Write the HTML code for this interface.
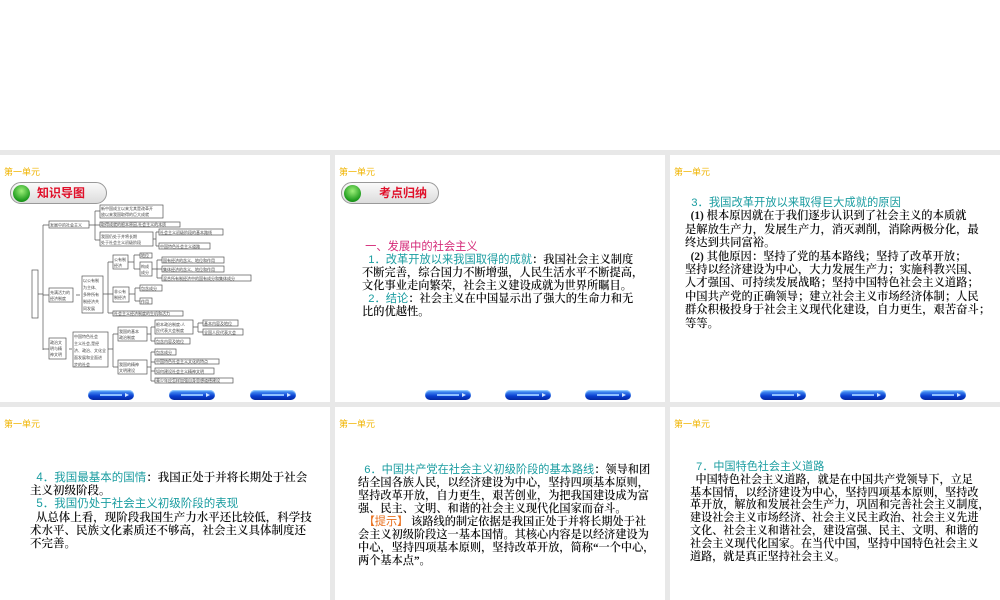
<!DOCTYPE html>
<html><head><meta charset="utf-8"><style>
*{margin:0;padding:0;box-sizing:border-box}
body{width:1000px;height:600px;overflow:hidden;background:#fff;position:relative;font-family:"Liberation Serif","Noto Serif CJK SC",serif}
.bg{position:absolute;left:0;top:150px;width:1000px;height:450px;background:#e8e8e8}
.s{position:absolute;background:#fff;width:330px;overflow:hidden}
.u{position:absolute;left:4px;top:12px;font-size:9px;color:#f0b400;font-family:"Liberation Sans","Noto Sans CJK SC",sans-serif;line-height:10px}
.t{position:absolute;white-space:nowrap;color:#111;font-weight:600}
.h{color:#1a9ca0;font-family:"Liberation Sans","Noto Sans CJK SC",sans-serif;font-weight:400}
.btn{position:absolute;top:235px;width:46px;height:10px;border-radius:5px;background:linear-gradient(#5aa8ff,#0a3fd0 60%,#0628a0);box-shadow:inset 0 1px 1px #9cd0ff}
.btn:after{content:"";position:absolute;right:5px;top:3px;border-left:4px solid #cfe4ff;border-top:2px solid transparent;border-bottom:2px solid transparent}
.btn:before{content:"";position:absolute;left:12px;top:4px;width:22px;height:2px;background:#8fc0ff}
.pill{position:absolute;left:10px;top:27px;width:97px;height:22px;border-radius:11px;border:1px solid #999;background:linear-gradient(#fafafa,#dcdcdc)}
.pill i{position:absolute;left:2px;top:2px;width:17px;height:17px;border-radius:50%;background:radial-gradient(circle at 50% 35%,#9ef07a,#1c9a1c 70%,#0b6a0b)}
.pill b{position:absolute;font-family:"Liberation Sans","Noto Sans CJK SC",sans-serif;font-size:12px;color:#e0102a;top:3px;line-height:15px}
</style></head><body>
<div class="bg"></div>

<!-- Slide 1 -->
<div class="s" style="left:0;top:155px;height:247px">
<div class="u">第一单元</div>
<div class="pill"><i></i><b style="left:26px">知识导图</b></div>
<svg width="330" height="247" style="position:absolute;left:0;top:0" font-family="Noto Sans CJK SC" font-size="4" fill="#444">
<g transform="translate(0,-155)" stroke="#555" stroke-width="0.7" fill="none">
<rect x="32" y="270" width="6" height="48" fill="#fff"/>
<path d="M38 294H43M43 225V350M43 225H49M43 295H49M43 349H49"/>
<rect x="49" y="221" width="40" height="7" fill="#fff"/>
<rect x="49" y="288" width="24" height="14" fill="#fff"/>
<rect x="49" y="338" width="17" height="21" fill="#fff"/>
<path d="M76 295H80M69 349H72M89 225H95M95 211V240M95 211H100M95 225H100M95 240H100"/>
<rect x="82" y="276" width="21" height="37" fill="#fff"/>
<rect x="73" y="332" width="35" height="35" fill="#fff"/>
<rect x="100" y="205" width="63" height="13" fill="#fff"/>
<rect x="100" y="222" width="80" height="5" fill="#fff"/>
<rect x="100" y="232" width="53" height="14" fill="#fff"/>
<path d="M153 239H156M156 232V246M156 232H159M156 246H159"/>
<rect x="159" y="229" width="64" height="6" fill="#fff"/>
<rect x="159" y="243" width="51" height="6" fill="#fff"/>
<path d="M103 294H108M108 262V313M108 262H113M108 294H113M108 313H113"/>
<rect x="113" y="255" width="15" height="14" fill="#fff"/>
<path d="M128 262H134M134 255V269M134 255H140M134 269H140"/>
<rect x="140" y="253" width="12" height="5" fill="#fff"/>
<rect x="140" y="262" width="12" height="14" fill="#fff"/>
<path d="M152 269H157M157 260V278M157 260H162M157 269H162M157 278H162"/>
<rect x="162" y="257" width="62" height="6" fill="#fff"/>
<rect x="162" y="266" width="62" height="6" fill="#fff"/>
<rect x="162" y="275" width="89" height="6" fill="#fff"/>
<rect x="113" y="287" width="16" height="15" fill="#fff"/>
<path d="M129 294H135M135 288V301M135 288H140M135 301H140"/>
<rect x="140" y="285" width="22" height="6" fill="#fff"/>
<rect x="140" y="298" width="12" height="6" fill="#fff"/>
<rect x="113" y="311" width="70" height="5" fill="#fff"/>
<path d="M108 349H113M113 334V367M113 334H118M113 367H118"/>
<rect x="118" y="327" width="29" height="14" fill="#fff"/>
<path d="M147 334H151M151 327V341M151 327H155M151 341H155"/>
<rect x="155" y="320" width="38" height="14" fill="#fff"/>
<path d="M193 327H198M198 323V332M198 323H203M198 332H203"/>
<rect x="203" y="320" width="35" height="6" fill="#fff"/>
<rect x="203" y="329" width="40" height="6" fill="#fff"/>
<rect x="155" y="338" width="35" height="6" fill="#fff"/>
<rect x="118" y="360" width="29" height="14" fill="#fff"/>
<path d="M147 367H151M151 352V381M151 352H155M151 362H155M151 371H155M151 381H155"/>
<rect x="155" y="349" width="21" height="6" fill="#fff"/>
<rect x="155" y="359" width="64" height="5" fill="#fff"/>
<rect x="155" y="368" width="59" height="6" fill="#fff"/>
<rect x="155" y="378" width="78" height="5" fill="#fff"/>
</g>
<g transform="translate(0,-155)" stroke="none">
<text x="50" y="226.5">发展中的社会主义</text>
<text x="50" y="294">充满活力的</text><text x="50" y="300">经济制度</text>
<text x="50" y="344">政治文</text><text x="50" y="350">明与精</text><text x="50" y="356">神文明</text>
<text x="83" y="282">以公有制</text><text x="83" y="289">为主体、</text><text x="83" y="296">多种所有</text><text x="83" y="303">制经济共</text><text x="83" y="310">同发展</text>
<text x="74" y="338">中国特色社会</text><text x="74" y="345">主义社会,是经</text><text x="74" y="352">济、政治、文化全</text><text x="74" y="359">面发展和全面进</text><text x="74" y="366">步的社会</text>
<text x="101" y="210">新中国成立以来尤其是改革开</text><text x="101" y="216">放以来我国取得的巨大成就</text>
<text x="101" y="226">取得成就的根本原因,社会主义的本质</text>
<text x="101" y="238">我国仍处于并将长期</text><text x="101" y="244">处于社会主义初级阶段</text>
<text x="160" y="234">社会主义初级阶段的基本路线</text><text x="160" y="248">中国特色社会主义道路</text>
<text x="114" y="261">公有制</text><text x="114" y="267">经济</text><text x="141" y="257">地位</text><text x="141" y="268">构成</text><text x="141" y="274">成分</text>
<text x="163" y="262">国有经济的含义、地位和作用</text><text x="163" y="271">集体经济的含义、地位和作用</text><text x="163" y="280">混合所有制经济中的国有成分和集体成分</text>
<text x="114" y="293">非公有</text><text x="114" y="299">制经济</text><text x="141" y="290">包含成分</text><text x="141" y="303">作用</text>
<text x="114" y="315">社会主义经济制度的生机和活力</text>
<text x="119" y="333">我国的基本</text><text x="119" y="339">政治制度</text>
<text x="156" y="326">根本政治制度:人</text><text x="156" y="332">民代表大会制度</text>
<text x="204" y="325">基本内容及地位</text><text x="204" y="334">全国人民代表大会</text>
<text x="156" y="343">包含内容及地位</text>
<text x="119" y="366">我国的精神</text><text x="119" y="372">文明建设</text>
<text x="156" y="354">包含成分</text><text x="156" y="363">中国特色社会主义文化的特点</text><text x="156" y="373">如何建设社会主义精神文明</text><text x="156" y="382">青少年应怎样加强自身思想道德建设</text>
</g>
</svg>
<div class="btn" style="left:88px"></div><div class="btn" style="left:169px"></div><div class="btn" style="left:250px"></div>
</div>

<!-- Slide 2 -->
<div class="s" style="left:335px;top:155px;height:247px">
<div class="u">第一单元</div>
<div class="pill" style="left:6px;width:98px"><i></i><b style="left:37px">考点归纳</b></div>
<div class="t" style="left:27px;top:86px;font-size:11.25px;line-height:12.9px">
<span style="color:#d42a78;font-family:'Liberation Sans','Noto Sans CJK SC',sans-serif;font-weight:400">&nbsp;一、发展中的社会主义</span><br>
<span class="h">&nbsp;&nbsp;1．改革开放以来我国取得的成就</span>：我国社会主义制度<br>
不断完善，综合国力不断增强，人民生活水平不断提高，<br>
文化事业走向繁荣，社会主义建设成就为世界所瞩目。<br>
<span class="h">&nbsp;&nbsp;2．结论</span>：社会主义在中国显示出了强大的生命力和无<br>
比的优越性。</div>
<div class="btn" style="left:90px"></div><div class="btn" style="left:170px"></div><div class="btn" style="left:250px"></div>
</div>

<!-- Slide 3 -->
<div class="s" style="left:670px;top:155px;height:247px">
<div class="u">第一单元</div>
<div class="t" style="left:15px;top:42px;font-size:11.3px;line-height:13.4px">
<span class="h">&nbsp;&nbsp;3．我国改革开放以来取得巨大成就的原因</span><br>
&nbsp;&nbsp;(1) 根本原因就在于我们逐步认识到了社会主义的本质就<br>
是解放生产力，发展生产力，消灭剥削，消除两极分化，最<br>
终达到共同富裕。<br>
&nbsp;&nbsp;(2) 其他原因：坚持了党的基本路线；坚持了改革开放；<br>
坚持以经济建设为中心，大力发展生产力；实施科教兴国、<br>
人才强国、可持续发展战略；坚持中国特色社会主义道路；<br>
中国共产党的正确领导；建立社会主义市场经济体制；人民<br>
群众积极投身于社会主义现代化建设，自力更生，艰苦奋斗；<br>
等等。</div>
<div class="btn" style="left:90px"></div><div class="btn" style="left:170px"></div><div class="btn" style="left:250px"></div>
</div>

<!-- Slide 4 -->
<div class="s" style="left:0;top:407px;height:193px">
<div class="u">第一单元</div>
<div class="t" style="left:30px;top:65px;font-size:11.5px;line-height:13.2px">
<span class="h">&nbsp;&nbsp;4．我国最基本的国情</span>：我国正处于并将长期处于社会<br>
主义初级阶段。<br>
<span class="h">&nbsp;&nbsp;5．我国仍处于社会主义初级阶段的表现</span><br>
&nbsp;&nbsp;从总体上看，现阶段我国生产力水平还比较低，科学技<br>
术水平、民族文化素质还不够高，社会主义具体制度还<br>
不完善。</div>
</div>

<!-- Slide 5 -->
<div class="s" style="left:335px;top:407px;height:193px">
<div class="u">第一单元</div>
<div class="t" style="left:23px;top:57px;font-size:11.2px;line-height:13px">
<span class="h">&nbsp;&nbsp;6．中国共产党在社会主义初级阶段的基本路线</span>：领导和团<br>
结全国各族人民，以经济建设为中心，坚持四项基本原则，<br>
坚持改革开放，自力更生，艰苦创业，为把我国建设成为富<br>
强、民主、文明、和谐的社会主义现代化国家而奋斗。<br>
&nbsp;&nbsp;<span style="color:#e8701e;font-family:'Liberation Sans','Noto Sans CJK SC',sans-serif;font-weight:400">【提示】</span> 该路线的制定依据是我国正处于并将长期处于社<br>
会主义初级阶段这一基本国情。其核心内容是以经济建设为<br>
中心，坚持四项基本原则，坚持改革开放，简称“一个中心，<br>
两个基本点”。</div>
</div>

<!-- Slide 6 -->
<div class="s" style="left:670px;top:407px;height:193px">
<div class="u">第一单元</div>
<div class="t" style="left:20px;top:54px;font-size:11.1px;line-height:12.8px">
<span class="h">&nbsp;&nbsp;7．中国特色社会主义道路</span><br>
&nbsp;&nbsp;中国特色社会主义道路，就是在中国共产党领导下，立足<br>
基本国情，以经济建设为中心，坚持四项基本原则，坚持改<br>
革开放，解放和发展社会生产力，巩固和完善社会主义制度，<br>
建设社会主义市场经济、社会主义民主政治、社会主义先进<br>
文化、社会主义和谐社会，建设富强、民主、文明、和谐的<br>
社会主义现代化国家。在当代中国，坚持中国特色社会主义<br>
道路，就是真正坚持社会主义。</div>
</div>
</body></html>
